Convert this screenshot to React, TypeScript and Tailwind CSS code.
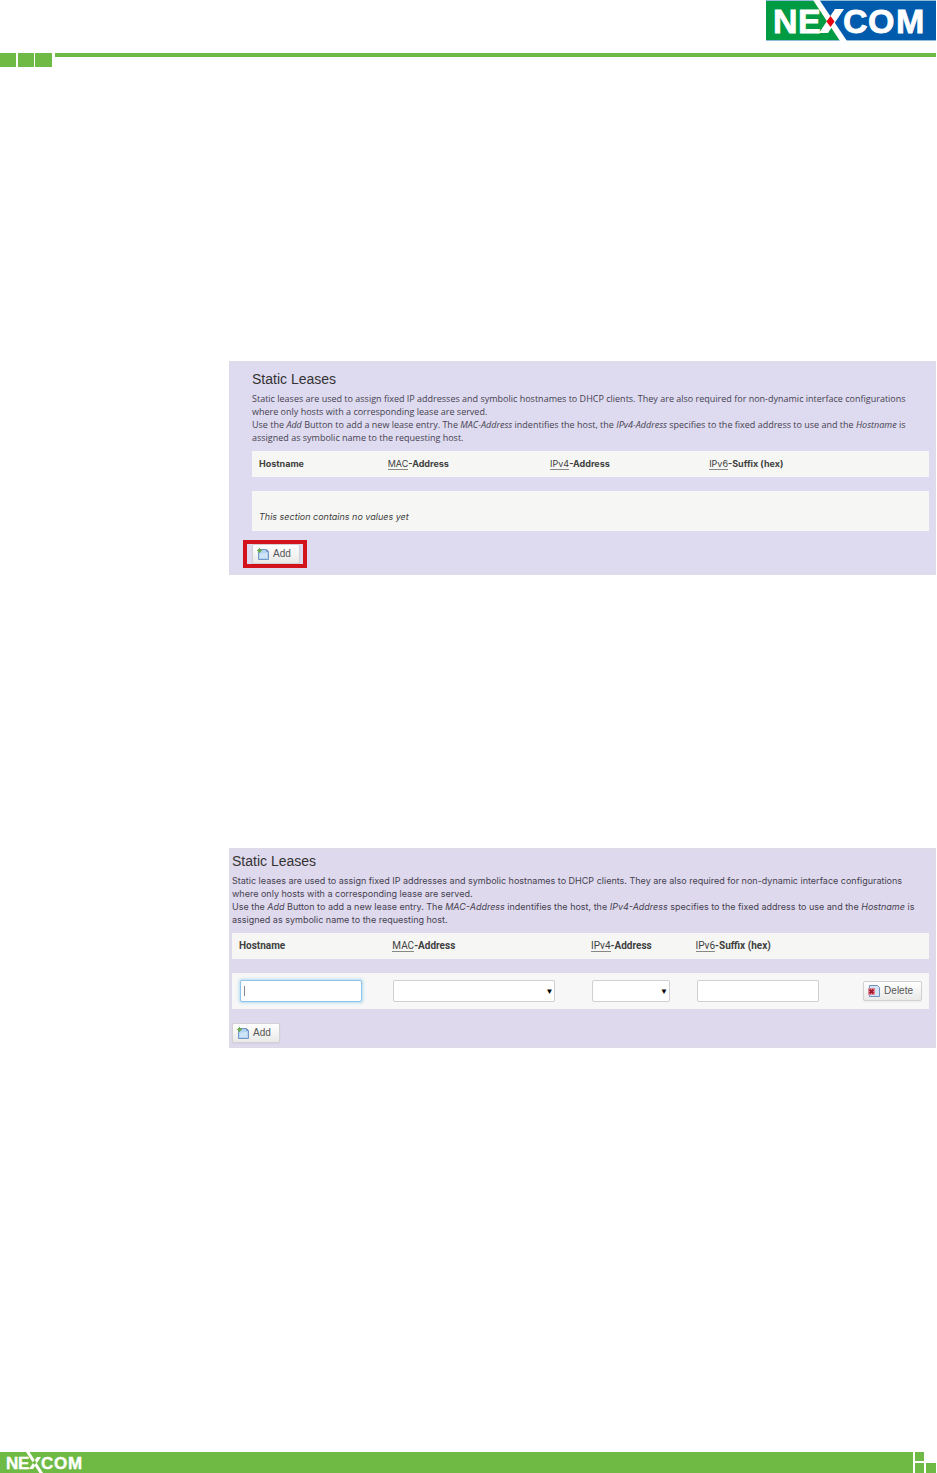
import type { ReactNode } from 'react';

const HEADINGS = ['Hostname', 'MAC', 'IPv4', 'IPv6'] as const;

function HeaderLogo() {
  return (
    <svg role="img" aria-label="NEXCOM" width="170" height="41" viewBox="0 0 170 41">
      <rect width="170" height="41" fill="#005bac" />
      <path d="M0 0H49L77 41H0Z" fill="#009b42" />
      <path d="M0 .5H170M0 40.5H170" stroke="#8fbcd8" strokeWidth="1" />
      <g fill="#fff" stroke="#fff" strokeWidth="0.8" fontFamily="Liberation Sans" fontWeight="700" fontSize="34">
        <text x="7" y="33">N</text>
        <text x="32" y="33">E</text>
        <text x="77" y="33">C</text>
        <text x="102" y="33">O</text>
        <text x="130" y="33">M</text>
      </g>
      <path d="M47 0H53.500L81 41H74Z" fill="#fff" />
      <path d="M69 9H78L62 33H53Z" fill="#fff" />
      <path d="M64.500 16L68.500 21.500L64.500 27L60.500 21.500Z" fill="#e60012" />
    </svg>
  );
}

function FooterLogo() {
  return (
    <svg role="img" aria-label="NEXCOM" className="ml-1.5" width="80" height="21" viewBox="0 0 80 21">
      <g fill="#fff" stroke="#fff" strokeWidth="0.4" fontFamily="Liberation Sans" fontWeight="700" fontSize="17">
        <text x="0" y="17">N</text>
        <text x="12" y="17">E</text>
        <text x="35" y="17">C</text>
        <text x="48" y="17">O</text>
        <text x="62" y="17">M</text>
      </g>
      <path d="M20 0H23.500L37 21H33.500Z" fill="#fff" />
      <path d="M31 5H35L27 17H23Z" fill="#fff" />
      <path d="M28.500 8L30.500 10.500L28.500 13L26.500 10.500Z" fill="#6fba44" />
    </svg>
  );
}

function AddIcon() {
  return (
    <svg aria-hidden="true" className="shrink-0" width="12" height="12" viewBox="0 0 12 12">
      <path d="M1.500 1.500H9.500L11.500 3.500V11.500H1.500Z" fill="#b4d3f1" stroke="#7296c6" />
      <path d="M3 6L10 4.500V10H3Z" fill="#cfe5f7" />
      <path d="M9.500 1.500V3.500H11.500" fill="none" stroke="#7296c6" />
      <path d="M2.500 0V5M0 2.500H5M1 1L4 4M4 1L1 4" stroke="#6cab55" strokeWidth="1" />
    </svg>
  );
}

function DeleteIcon() {
  return (
    <svg aria-hidden="true" className="shrink-0" width="12" height="12" viewBox="0 0 12 12">
      <path d="M1.500 .5H9.500L11.500 2.500V11.500H1.500Z" fill="#d3e3f4" stroke="#6f93c2" />
      <rect x="0" y="3" width="7" height="7" fill="#e08b98" />
      <path d="M1.500 4.500L5.500 8.500M5.500 4.500L1.500 8.500" stroke="#a3152f" strokeWidth="1.800" />
    </svg>
  );
}

function ActionButton({ icon, children }: { icon: ReactNode; children: ReactNode }) {
  return (
    <button
      type="button"
      className="flex h-5 items-center gap-1 rounded-xs border border-[#d2d0d4] bg-linear-to-b from-white to-[#e9e9e8] px-1 pr-2 font-['Liberation_Sans',Arial,sans-serif] text-[10px] leading-3 text-[#555] shadow-xs"
    >
      {icon}
      {children}
    </button>
  );
}

function Intro({ font }: { font: string }) {
  return (
    <>
      <h2 className="text-[14px] leading-5 text-[#333]">Static Leases</h2>
      <p className={`mt-[3px] text-[9px] leading-[13px] text-[#45424f] ${font}`}>
        Static leases are used to assign fixed IP addresses and symbolic hostnames to DHCP clients. They are also required for non-dynamic interface configurations
        <br />
        where only hosts with a corresponding lease are served.
        <br />
        Use the <em>Add</em> Button to add a new lease entry. The <em>MAC-Address</em> indentifies the host, the <em>IPv4-Address</em> specifies to the fixed address to use and the <em>Hostname</em> is
        <br />
        assigned as symbolic name to the requesting host.
      </p>
    </>
  );
}

function Heading({ name }: { name: (typeof HEADINGS)[number] }) {
  if (name === 'Hostname') return <>Hostname</>;
  return (
    <>
      <abbr className="border-b border-[#888] font-normal no-underline">{name}</abbr>
      {name === 'IPv6' ? '-Suffix (hex)' : '-Address'}
    </>
  );
}

function HeadRow({ trailing = false }: { trailing?: boolean }) {
  return (
    <thead>
      <tr className="h-[26px] bg-[#f6f7f4]">
        {HEADINGS.map((name) => (
          <th key={name} scope="col" className="pl-[7px] text-left font-bold whitespace-nowrap">
            <Heading name={name} />
          </th>
        ))}
        {trailing && <td />}
      </tr>
      <tr aria-hidden="true" className="h-3.5">
        <td colSpan={trailing ? 5 : 4} />
      </tr>
    </thead>
  );
}

function Dropdown({ label, width }: { label: string; width: string }) {
  return (
    <div className={`relative ${width}`}>
      <select aria-label={label} className="block h-[22px] w-full appearance-none rounded-xs border border-[#d0d0d0] bg-white" />
      <span aria-hidden="true" className="pointer-events-none absolute top-1.5 right-0.5 text-[8px] leading-3 text-black">
        ▼
      </span>
    </div>
  );
}

export default function App() {
  return (
    <div className="flex min-h-screen flex-col bg-white pr-px font-['Liberation_Sans',Arial,sans-serif]">
      <header>
        <div className="flex h-[53px] justify-end">
          <HeaderLogo />
        </div>
        <div className="flex h-3.5">
          <div className="w-4 bg-[#6fba44]" />
          <div className="ml-0.5 w-4 bg-[#6fba44]" />
          <div className="ml-px w-[17px] bg-[#6fba44]" />
          <div className="ml-[3px] h-1 grow bg-[#6fba44]" />
        </div>
      </header>

      <main className="grow pt-[294px] pl-[229px]">
        <section className="border border-[#dddbe5] bg-[#dedaef] pt-[7px] pr-1.5 pb-1.5 pl-[22px]">
          <Intro font="font-['Open_Sans',sans-serif]" />
          <table className="mt-[7px] w-full table-fixed border-collapse font-[Inter,sans-serif] text-[9px] leading-3 text-[#404040]">
            <colgroup>
              <col className="w-[19%]" />
              <col className="w-[24%]" />
              <col className="w-[23.500%]" />
              <col />
            </colgroup>
            <HeadRow />
            <tbody>
              <tr className="h-10 bg-[#f6f7f4]">
                <td colSpan={4} className="pt-3 pl-[7px] italic">
                  This section contains no values yet
                </td>
              </tr>
            </tbody>
          </table>
          <div className="-ml-[9px] mt-[9px] w-fit border-4 border-[#d3131b] pl-[5px] pr-[3px]">
            <ActionButton icon={<AddIcon />}>Add</ActionButton>
          </div>
        </section>

        <section className="mt-[273px] border border-[#dddbe5] bg-[#dfd9ee] pt-0.5 pr-1.5 pb-1 pl-0.5">
          <Intro font="font-[Inter,sans-serif]" />
          <table className="mt-[7px] w-full table-fixed border-collapse font-[Roboto,sans-serif] text-[10px] leading-3 text-[#404040]">
            <colgroup>
              <col className="w-[22%]" />
              <col className="w-[28.500%]" />
              <col className="w-[15%]" />
              <col className="w-[24%]" />
              <col />
            </colgroup>
            <HeadRow trailing />
            <tbody>
              <tr className="h-9 bg-[#f6f7f6]">
                <td className="pl-2">
                  <div className="relative w-[122px]">
                    <input
                      aria-label="Hostname"
                      className="block h-[22px] w-full rounded-xs border border-[#8fc3e8] bg-white px-1 shadow-[0_0_3px_1px_#b5daf2] outline-none"
                    />
                    <span aria-hidden="true" className="absolute top-1.5 left-1 h-2.5 w-px bg-[#888]" />
                  </div>
                </td>
                <td className="pl-2">
                  <Dropdown label="MAC-Address" width="w-[162px]" />
                </td>
                <td className="pl-2">
                  <Dropdown label="IPv4-Address" width="w-[78px]" />
                </td>
                <td className="pl-2">
                  <input aria-label="IPv6-Suffix (hex)" className="block h-[22px] w-[122px] rounded-xs border border-[#d0d0d0] bg-white px-1" />
                </td>
                <td className="pr-[7px]">
                  <div className="flex justify-end">
                    <ActionButton icon={<DeleteIcon />}>Delete</ActionButton>
                  </div>
                </td>
              </tr>
            </tbody>
          </table>
          <div className="mt-3.5 w-fit">
            <ActionButton icon={<AddIcon />}>Add</ActionButton>
          </div>
        </section>
      </main>

      <footer className="flex h-[21px]">
        <div className="grow bg-[#6fba44]">
          <FooterLogo />
        </div>
        <div className="ml-0.5 grid grid-cols-[9px_10px] grid-rows-[9px_10px] gap-0.5">
          <div className="bg-[#6fba44]" />
          <div />
          <div className="bg-[#6fba44]" />
          <div className="bg-[#6fba44]" />
        </div>
      </footer>
    </div>
  );
}
